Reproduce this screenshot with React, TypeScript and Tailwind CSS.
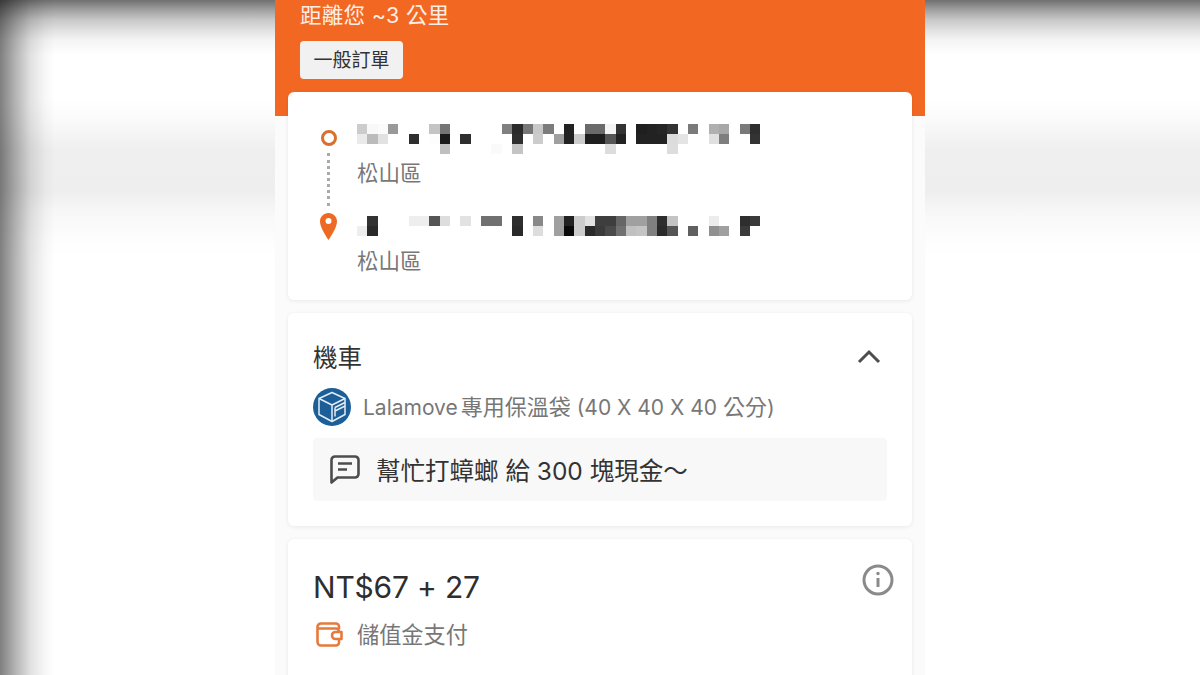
const font = { fontFamily: 'Inter, "Noto Sans CJK TC", sans-serif' }

// pixelated address rows, read off the picture: empty = no cell
type Row = string[]
const mosaicA: Row[] = [
  ['#ccc', '#f8f8f8', '#fbfbfb', '#999', '', '', '', '#c4c4c4', '#757575', '', '', '', '', '', '#808080', '#2a2a2a', '#777', '#c8c8c8', '#7c7c7c', '', '#222', '', '#6a6a6a', '#6a6a6a', '#f4f4f4', '#333', '', '#1f1f1f', '#222', '#252525', '#333', '', '#7a7a7a', '', '#b0b0b0', '#a8a8a8', '', '#7a7a7a', '#2e2e2e'],
  ['#eaeaea', '#bbb', '#e2e2e2', '', '', '#2e2e2e', '', '#fdfdfd', '#1a1a1a', '', '#2e2e2e', '', '', '', '', '#2e2e2e', '', '#ccc', '', '#a0a0a0', '#222', '#ccc', '#1e1e1e', '#1e1e1e', '#555', '#222', '', '#222', '#222', '#222', '#dcdcdc', '#e4e4e4', '', '', '#e0e0e0', '#7e7e7e', '', '', '#333'],
  ['', '', '', '', '', '', '', '', '#bfbfbf', '', '', '', '', '#fafafa', '', '#c4c4c4', '', '', '', '', '', '', '', '', '#ddd', '', '', '', '', '', '#ddd', '', '', '', '', '', '', '', ''],
]
const mosaicB: Row[] = [
  ['', '#333', '', '', '', '#eee', '#eee', '#555', '#ddd', '', '#e2e2e2', '', '#707070', '#707070', '', '#2e2e2e', '', '#888', '', '#a0a0a0', '#222', '#ccc', '#e2e2e2', '#3e3e3e', '#3e3e3e', '#666', '#a0a0a0', '#a0a0a0', '#808080', '#2e2e2e', '#c4c4c4', '', '', '', '#ececec', '', '', '#2e2e2e', '#3a3a3a'],
  ['#eee', '#2a2a2a', '', '', '', '', '', '', '', '', '', '', '', '', '', '#2a2a2a', '', '#ddd', '', '#a0a0a0', '#0a0a0a', '#ccc', '#2a2a2a', '#3a3a3a', '#4a4a4a', '#707070', '#c0c0c0', '#c4c4c4', '#808080', '#2a2a2a', '#555', '', '#606060', '', '#909090', '#a0a0a0', '', '#3a3a3a', ''],
]

function Mosaic({ rows }: { rows: Row[] }) {
  return (
    <div className="grid grid-cols-[repeat(39,10.35px)] auto-rows-[10px] blur-[0.3px]">
      {rows.flat().map((c, i) => (
        <div key={i} style={{ backgroundColor: c || 'transparent' }} />
      ))}
    </div>
  )
}

function RouteIcons() {
  return (
    <div className="w-[17px] flex flex-col items-center pt-[38px]">
      <div className="size-[16px] rounded-full border-[3px] border-[#d9702f] bg-white" />
      <div className="mt-[7px] h-[53px] border-l-[3px] border-dotted border-[#aaa]" />
      <svg className="mt-[7px]" width="17" height="27" viewBox="0 0 17 27">
        <path
          d="M8.5 0C3.8 0 0 3.7 0 8.4c0 5.8 6 14.6 8.5 18.6C11 23 17 14.2 17 8.4 17 3.7 13.2 0 8.5 0Z"
          fill="#ee6a22"
        />
        <circle cx="8.5" cy="8" r="3" fill="#fff" />
      </svg>
    </div>
  )
}

function BoxLogo() {
  return (
    <svg className="shrink-0" width="38" height="38" viewBox="0 0 38 38">
      <circle cx="19" cy="19" r="19" fill="#1c5f98" />
      <g fill="none" stroke="#e3edf6" strokeWidth="1.5" strokeLinejoin="round">
        <path d="M19 4.5 32 10.5v16L19 33.5 6 26.5v-16Z" />
        <path d="M6 10.5l13 6.5 13-6.5M19 17v16.5" />
        <path d="M22 19.5l10-5M22 23l10-5M22 19.5v9" />
      </g>
    </svg>
  )
}

function NoteIcon() {
  return (
    <svg className="shrink-0" width="30" height="29" viewBox="0 0 30 29" fill="none" stroke="#4d4d4d" strokeWidth="2.6">
      <path d="M5 1.5h20A3.5 3.5 0 0 1 28.5 5v14a3.5 3.5 0 0 1-3.5 3.5H7.5l-6 5V5A3.5 3.5 0 0 1 5 1.5Z" strokeLinejoin="round" />
      <path d="M8 8.5h14M8 14.5h9" />
    </svg>
  )
}

function WalletIcon() {
  return (
    <svg className="shrink-0" width="27" height="25" viewBox="0 0 27 25" fill="none" stroke="#e67a3c" strokeWidth="2.6">
      <path d="M23 7V4.5A3 3 0 0 0 20 1.5H5A3.5 3.5 0 0 0 1.5 5v15A3.5 3.5 0 0 0 5 23.5h15a3 3 0 0 0 3-3V18" />
      <path d="M2 6.5h18a3 3 0 0 1 3 3V10" />
      <path d="M19.5 10h6v7h-6a3.5 3.5 0 0 1 0-7Z" strokeLinejoin="round" />
    </svg>
  )
}

export default function App() {
  return (
    <div
      className="h-[675px] w-[1200px] overflow-hidden flex justify-center bg-white bg-[linear-gradient(to_right,#00000080_0px,#0000004d_15px,#0000001f_30px,#00000008_45px,#00000000_55px),linear-gradient(to_bottom,#707070_0px,#a0a0a0_10px,#c8c8c8_20px,#e0e0e0_30px,#f4f4f4_40px,#ffffff_55px,#ffffff_100px,#fafafa_120px,#efefef_150px,#eeeeee_190px,#f8f8f8_215px,#fdfdfd_240px,#ffffff_260px)] text-[#333]"
      style={font}
    >
      <main className="w-[650px] h-full bg-[#fbfbfb]">
        <header className="h-[116px] bg-[#f26822] px-[25px] pt-[2px]">
          <p className="text-[21.5px] leading-[26px] tracking-[0.3px] text-[#fdeee4]">距離您 ~3 公里</p>
          <span className="mt-[13px] inline-flex h-[38px] w-[103px] items-center justify-center rounded-[4px] bg-[#f1f1f1] text-[19px] leading-[38px] pt-[1px] text-[#333]">
            一般訂單
          </span>
        </header>

        <div className="-mt-[24px] px-[13px] flex flex-col gap-[13px]">
          <section className="h-[208px] rounded-[6px] bg-white shadow-[0_1px_4px_#00000014] pl-[32px] flex gap-[20px]">
            <RouteIcons />
            <div className="pt-[32px]">
              <Mosaic rows={mosaicA} />
              <p className="mt-[5px] text-[21.5px] leading-[28px] text-[#777]">松山區</p>
              <div className="mt-[29px]">
                <Mosaic rows={mosaicB} />
              </div>
              <p className="mt-[11px] text-[21.5px] leading-[28px] text-[#777]">松山區</p>
            </div>
          </section>

          <section className="h-[213px] rounded-[6px] bg-white shadow-[0_1px_4px_#00000014] px-[25px] pt-[29px]">
            <div className="flex items-center justify-between">
              <h2 className="text-[24.5px] leading-[32px] text-[#333]">機車</h2>
              <svg className="mr-[6px] -mt-[3px]" width="24" height="15" viewBox="0 0 24 15" fill="none" stroke="#4d4d4d" strokeWidth="3">
                <path d="M2 13 12 3l10 10" />
              </svg>
            </div>
            <div className="mt-[14px] flex items-center gap-[12px]">
              <BoxLogo />
              <p className="text-[21px] text-[#777]">
                Lalamove<span className="ml-[3px] text-[22px]">專用保溫袋</span> (40 X 40 X 40 <span className="text-[22px]">公分</span>)
              </p>
            </div>
            <div className="mt-[12px] h-[63px] rounded-[4px] bg-[#f8f8f8] pl-[17px] flex items-center gap-[16px]">
              <NoteIcon />
              <p className="pt-[3px] text-[24.5px] text-[#333]">幫忙打蟑螂 給 300 塊現金～</p>
            </div>
          </section>

          <section className="relative h-[200px] rounded-[6px] bg-white shadow-[0_1px_4px_#00000014] px-[25px] pt-[28px]">
            <p className="text-[30px] leading-[40px] -tracking-[0.2px] text-[#2e2e2e]">NT$67 + 27</p>
            <div className="mt-[11px] ml-[3px] flex items-center gap-[14px]">
              <WalletIcon />
              <p className="text-[22.2px] text-[#777]">儲值金支付</p>
            </div>
            <svg className="absolute top-[25px] right-[18px]" width="32" height="32" viewBox="0 0 32 32" fill="none" stroke="#8a8a8a" strokeWidth="3">
              <circle cx="16" cy="16" r="14" />
              <path d="M16 14v9" />
              <circle cx="16" cy="9.5" r="1" fill="#8a8a8a" strokeWidth="1.5" />
            </svg>
          </section>
        </div>
      </main>
    </div>
  )
}
